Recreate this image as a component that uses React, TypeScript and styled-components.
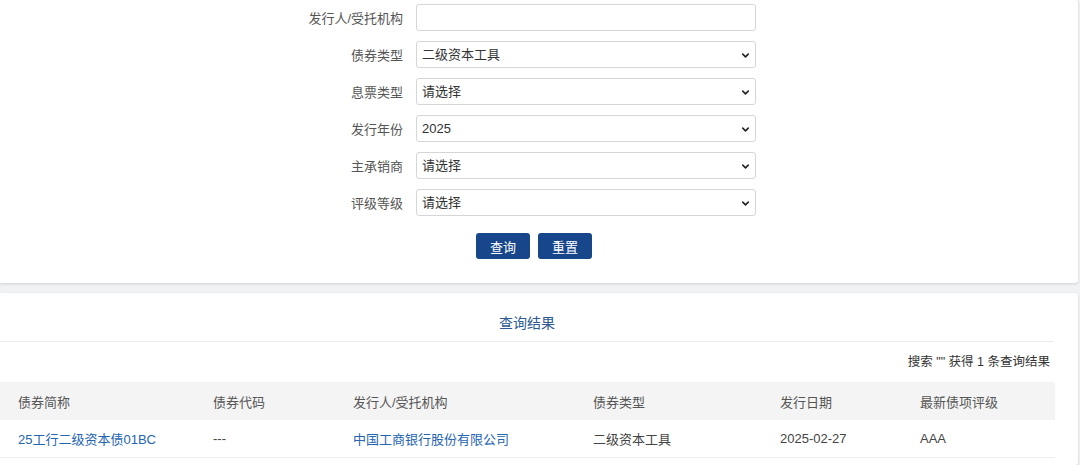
import React from "react";
import styled, { createGlobalStyle } from "styled-components";
import { ChevronDown } from "lucide-react";

const GlobalStyle = createGlobalStyle`
  html, body {
    margin: 0;
    padding: 0;
    background: #f1f2f4;
    font-family: "Liberation Sans", "Noto Sans CJK SC", sans-serif;
    font-size: 13px;
    color: #333;
  }
  * { box-sizing: border-box; }
`;

const Page = styled.div`
  width: 1080px;
  height: 465px;
  overflow: hidden;
  padding-right: 2px;
  display: flex;
  flex-direction: column;
  gap: 10px;
`;

const Card = styled.div`
  background: #fff;
  border-radius: 0 3px 3px 0;
  box-shadow: 0 1px 3px rgba(0, 0, 0, 0.14);
`;

const SearchCard = styled(Card)`
  padding: 4px 0 24px;
`;

const FormGrid = styled.div`
  display: grid;
  grid-template-columns: 403px 340px;
  column-gap: 13px;
  row-gap: 10px;
  align-items: center;
`;

const Label = styled.label`
  text-align: right;
  color: #555;
  font-size: 13px;
`;

const TextInput = styled.input`
  height: 27px;
  border: 1px solid #d6d6d6;
  border-radius: 3px;
  padding: 0 6px;
  font: inherit;
  outline: none;
`;

const SelectWrap = styled.div`
  position: relative;
  height: 27px;
`;

const Select = styled.select`
  width: 100%;
  height: 27px;
  appearance: none;
  border: 1px solid #d6d6d6;
  border-radius: 3px;
  background: #fff;
  padding: 0 24px 0 5px;
  font: inherit;
  font-size: 13px;
  color: #333;
  outline: none;
`;

const Chevron = styled(ChevronDown)`
  position: absolute;
  right: 5px;
  top: 9px;
  pointer-events: none;
  color: #222;
`;

const Buttons = styled.div`
  display: flex;
  justify-content: center;
  gap: 8px;
  margin-top: 17px;
  padding-right: 10px;
`;

const Button = styled.button`
  width: 54px;
  height: 26px;
  border: none;
  border-radius: 3px;
  background: #17478a;
  color: #fff;
  font: inherit;
  font-size: 13px;
  cursor: pointer;
`;

const ResultCard = styled(Card)`
  flex: 1;
`;

const ResultTitle = styled.div`
  text-align: center;
  color: #2c5a93;
  font-size: 14px;
  line-height: 20px;
  padding: 20px 0 8px;
  border-bottom: 1px solid #ececec;
  margin-right: 24px;
`;

const Summary = styled.div`
  text-align: right;
  color: #333;
  font-size: 12.5px;
  line-height: 20px;
  padding: 10px 28px 10px 0;
`;

const Table = styled.table`
  width: 1055px;
  border-collapse: collapse;
  font-size: 13px;
`;

const HeadCell = styled.th<{ $w: number }>`
  width: ${(p) => p.$w}px;
  text-align: left;
  font-weight: normal;
  color: #555;
  background: #f4f4f4;
  height: 38px;
  padding: 0 0 0 18px;
`;

const Cell = styled.td<{ $link?: boolean }>`
  height: 37px;
  padding: 0 0 0 18px;
  color: ${(p) => (p.$link ? "#2364b3" : "#444")};
  border-bottom: 1px solid #eeeeee;
`;

const fields: { label: string; value: string }[] = [
  { label: "债券类型", value: "二级资本工具" },
  { label: "息票类型", value: "请选择" },
  { label: "发行年份", value: "2025" },
  { label: "主承销商", value: "请选择" },
  { label: "评级等级", value: "请选择" },
];

const columns = [
  { title: "债券简称", w: 195 },
  { title: "债券代码", w: 140 },
  { title: "发行人/受托机构", w: 240 },
  { title: "债券类型", w: 187 },
  { title: "发行日期", w: 140 },
  { title: "最新债项评级", w: 153 },
];

export default function App() {
  return (
    <>
      <GlobalStyle />
      <Page>
        <SearchCard>
          <FormGrid>
            <Label>发行人/受托机构</Label>
            <TextInput type="text" />
            {fields.map((f) => (
              <React.Fragment key={f.label}>
                <Label>{f.label}</Label>
                <SelectWrap>
                  <Select defaultValue={f.value}>
                    <option>{f.value}</option>
                  </Select>
                  <Chevron size={11} strokeWidth={3.4} />
                </SelectWrap>
              </React.Fragment>
            ))}
          </FormGrid>
          <Buttons>
            <Button>查询</Button>
            <Button>重置</Button>
          </Buttons>
        </SearchCard>

        <ResultCard>
          <ResultTitle>查询结果</ResultTitle>
          <Summary>搜索 "" 获得 1 条查询结果</Summary>
          <Table>
            <thead>
              <tr>
                {columns.map((c) => (
                  <HeadCell key={c.title} $w={c.w}>
                    {c.title}
                  </HeadCell>
                ))}
              </tr>
            </thead>
            <tbody>
              <tr>
                <Cell $link>25工行二级资本债01BC</Cell>
                <Cell>---</Cell>
                <Cell $link>中国工商银行股份有限公司</Cell>
                <Cell>二级资本工具</Cell>
                <Cell>2025-02-27</Cell>
                <Cell>AAA</Cell>
              </tr>
            </tbody>
          </Table>
        </ResultCard>
      </Page>
    </>
  );
}
